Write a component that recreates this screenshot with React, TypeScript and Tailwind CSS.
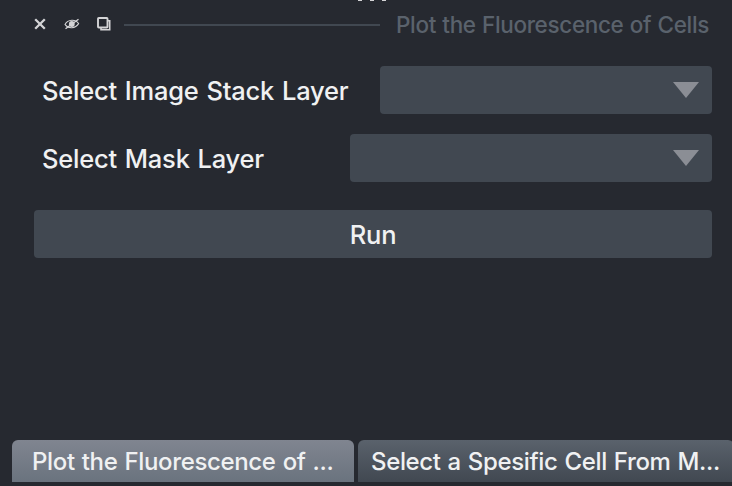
function Select({ className }: { className: string }) {
  return (
    <div className={`flex h-12 items-center justify-end rounded-[4px] bg-[#414851] pr-[13px] ${className}`}>
      <svg width="26" height="16" viewBox="0 0 26 16" className="block">
        <path d="M0 0H26L13 16Z" fill="#8b8e95" />
      </svg>
    </div>
  );
}

export default function App() {
  return (
    <div className="relative flex h-[486px] w-[732px] flex-col overflow-hidden bg-[#262930] font-['Inter',sans-serif] font-medium whitespace-nowrap text-[#f0f1f2]">
      <div className="absolute top-0 left-[358px] flex gap-2">
        <span className="h-px w-1 bg-[#d4d4d6]" />
        <span className="h-px w-1 bg-[#d4d4d6]" />
        <span className="h-px w-1 bg-[#d4d4d6]" />
      </div>
      <header className="flex h-[50px] items-center pl-[34px]">
        <svg width="12" height="12" viewBox="0 0 12 12" className="-mt-0.5 block shrink-0">
          <path d="M1.2 1.2L10.8 10.8M10.8 1.2L1.2 10.8" stroke="#d4d4d6" strokeWidth="2.3" />
        </svg>
        <svg width="16" height="12" viewBox="0 0 16 12" className="-mt-0.5 ml-[18px] block shrink-0" fill="none" stroke="#d4d4d6">
          <path d="M1 6.4C4 1.2 11.500 .8 14.600 5.600C11.500 10.600 4.200 11.200 1 6.400Z" strokeWidth="1.1" />
          <circle cx="7.800" cy="6" r="2.900" fill="#d4d4d6" stroke="none" />
          <path d="M1.500 10.700L14.500 1.200" strokeWidth="1.300" />
        </svg>
        <svg width="14" height="14" viewBox="0 0 14 14" className="-mt-0.5 ml-[17px] block shrink-0" fill="none" stroke="#d4d4d6">
          <path d="M11 3.800H12.700V12.800H4V11" strokeWidth="1.600" />
          <rect x="1" y="1" width="9.500" height="9.500" rx=".8" strokeWidth="1.900" />
        </svg>
        <div className="ml-[13px] h-[2px] w-[256px] bg-[#414851]" />
        <h1 className="ml-4 text-[22.5px] leading-[50px] tracking-[-0.35px] text-[#5a626c] [word-spacing:0.7px]">Plot the Fluorescence of Cells</h1>
      </header>
      <main className="flex flex-1 flex-col pt-4 pr-5 pl-[34px]">
        <div className="flex h-12 items-center justify-between pl-2">
          <label className="pt-0.5 text-[25.5px] leading-[48px] tracking-[-0.22px] [word-spacing:1.3px]">Select Image Stack Layer</label>
          <Select className="w-[332px]" />
        </div>
        <div className="mt-5 flex h-12 items-center justify-between pl-2">
          <label className="pt-0.5 text-[25.5px] leading-[48px] tracking-[-0.22px] [word-spacing:1.3px]">Select Mask Layer</label>
          <Select className="w-[362px]" />
        </div>
        <button className="mt-7 h-12 rounded-[4px] bg-[#414851] pt-0.5 text-[25.5px] leading-[46px] tracking-[-0.22px]">Run</button>
      </main>
      <footer className="flex h-[46px] gap-1 pl-3">
        <div className="h-[42px] w-[342px] shrink-0 rounded-t-[6px] bg-linear-to-b from-[#808590] to-[#6a737e] pt-px pl-5 text-[24px] leading-[42px] tracking-[-0.35px] [word-spacing:1px]">
          Plot the Fluorescence of ...
        </div>
        <div className="h-[42px] w-[376px] shrink-0 rounded-t-[6px] bg-linear-to-b from-[#5a626c] to-[#414851] pt-px pl-[13px] text-[24px] leading-[42px] tracking-[-0.35px] [word-spacing:0.9px]">
          Select a Spesific Cell From M...
        </div>
      </footer>
    </div>
  );
}
